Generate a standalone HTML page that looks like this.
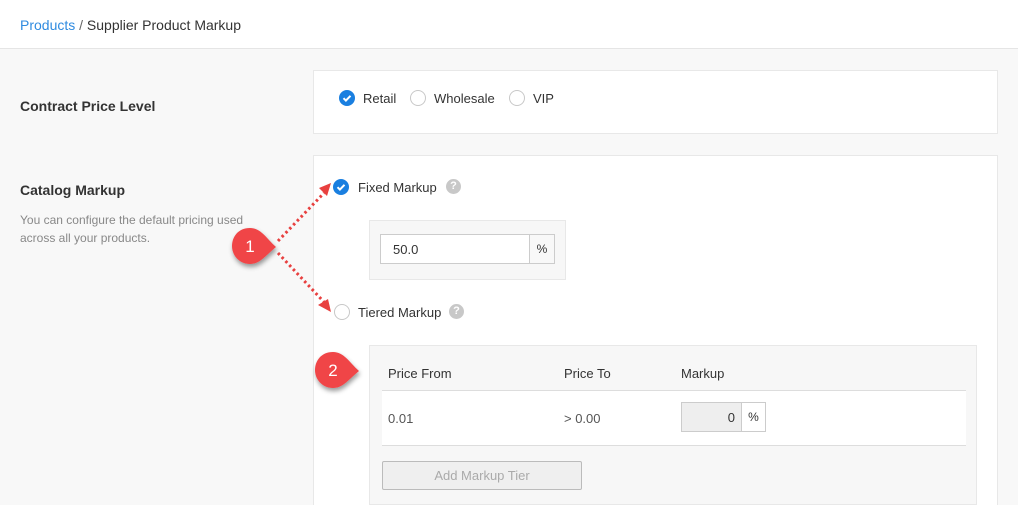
<!DOCTYPE html>
<html><head><style>
*{box-sizing:border-box;margin:0;padding:0}
html,body{width:1018px;height:505px;overflow:hidden}
body{background:#f8f8f8;font-family:"Liberation Sans",sans-serif;font-size:13px;color:#333;position:relative}
.a{position:absolute}
.hdr{left:0;top:0;width:1018px;height:49px;background:#fff;border-bottom:1px solid #e5e5e5}
.card{background:#fff;border:1px solid #e8e8e8}
.rad{width:16px;height:16px;border-radius:50%;border:1px solid #c8c8c8;background:#fff}
.q{width:15px;height:15px;border-radius:50%;background:#c8c8c8;color:#fff;font-size:11px;font-weight:bold;text-align:center;line-height:15px}
.b{font-weight:bold;font-size:14px;color:#333}
</style></head><body>
<div class="a hdr"></div>
<div class="a" style="left:20px;top:17px;font-size:14px"><span style="color:#2f8be0">Products</span> <span style="color:#666">/</span> Supplier Product Markup</div>

<div class="a card" style="left:313px;top:70px;width:685px;height:64px"></div>
<div class="a b" style="left:20px;top:98px">Contract Price Level</div>
<svg class="a" style="left:339px;top:90px" width="16" height="16"><circle cx="8" cy="8" r="8" fill="#1a7fe0"/><path d="M4.5 8.2l2.4 2.4 4.6-4.8" stroke="#fff" stroke-width="2" fill="none"/></svg>
<div class="a" style="left:363px;top:91px">Retail</div>
<div class="a rad" style="left:410px;top:90px"></div>
<div class="a" style="left:434px;top:91px">Wholesale</div>
<div class="a rad" style="left:509px;top:90px"></div>
<div class="a" style="left:533px;top:91px">VIP</div>

<div class="a card" style="left:313px;top:155px;width:685px;height:355px"></div>
<div class="a b" style="left:20px;top:182px">Catalog Markup</div>
<div class="a" style="left:20px;top:211px;color:#888;font-size:12px;line-height:18px">You can configure the default pricing used<br>across all your products.</div>

<svg class="a" style="left:333px;top:179px" width="16" height="16"><circle cx="8" cy="8" r="8" fill="#1a7fe0"/><path d="M4.5 8.2l2.4 2.4 4.6-4.8" stroke="#fff" stroke-width="2" fill="none"/></svg>
<div class="a" style="left:358px;top:180px">Fixed Markup</div>
<div class="a q" style="left:446px;top:179px">?</div>

<div class="a" style="left:369px;top:220px;width:197px;height:60px;background:#f7f7f7;border:1px solid #e8e8e8"></div>
<div class="a" style="left:380px;top:234px;width:150px;height:30px;background:#fff;border:1px solid #ccc;padding:7px 12px">50.0</div>
<div class="a" style="left:529px;top:234px;width:26px;height:30px;background:#f8f8f8;border:1px solid #ccc;text-align:center;line-height:28px;font-size:12px">%</div>

<div class="a rad" style="left:334px;top:304px"></div>
<div class="a" style="left:358px;top:305px">Tiered Markup</div>
<div class="a q" style="left:449px;top:304px">?</div>

<div class="a" style="left:369px;top:345px;width:608px;height:160px;background:#f7f7f7;border:1px solid #e8e8e8"></div>
<div class="a" style="left:382px;top:390px;width:584px;height:56px;background:#fff;border-top:1px solid #ddd;border-bottom:1px solid #ddd"></div>
<div class="a" style="left:388px;top:366px">Price From</div>
<div class="a" style="left:564px;top:366px">Price To</div>
<div class="a" style="left:681px;top:366px">Markup</div>
<div class="a" style="left:388px;top:411px;color:#555">0.01</div>
<div class="a" style="left:564px;top:411px;color:#555">&gt; 0.00</div>
<div class="a" style="left:681px;top:402px;width:61px;height:30px;background:#eee;border:1px solid #ccc;text-align:right;padding:7px 6px">0</div>
<div class="a" style="left:741px;top:402px;width:25px;height:30px;background:#fff;border:1px solid #ccc;text-align:center;line-height:28px;font-size:12px">%</div>
<div class="a" style="left:382px;top:461px;width:200px;height:29px;background:#efefef;border:1px solid #bbb;border-radius:2px;color:#aaa;text-align:center;line-height:27px">Add Markup Tier</div>

<svg class="a" style="left:0;top:0" width="1018" height="505">
<defs><filter id="s" x="-50%" y="-50%" width="200%" height="200%"><feDropShadow dx="1" dy="3" stdDeviation="2.5" flood-opacity="0.4"/></filter></defs>
<g stroke="#e8403f" stroke-width="3" stroke-dasharray="2.5 3" fill="none">
<path d="M278 241 L324 193"/><path d="M278 253 L324 302"/>
</g>
<path d="M319 188 L331 183 L327 196Z" fill="#e8403f"/>
<path d="M318 305 L331 312 L328 299Z" fill="#e8403f"/>
<g filter="url(#s)">
<path d="M250 228 C238 228 232 237 232 246 C232 256 240 264 250 264 C260 264 265 256 276 247 C266 238 261 228 250 228Z" fill="#f04447"/>
<path d="M333 352 C321 352 315 361 315 370 C315 380 323 388 333 388 C343 388 348 380 359 371 C349 362 344 352 333 352Z" fill="#f04447"/>
</g>
<text x="250" y="252" fill="#fff" font-size="17" text-anchor="middle" font-family="Liberation Sans">1</text>
<text x="333" y="376" fill="#fff" font-size="17" text-anchor="middle" font-family="Liberation Sans">2</text>
</svg>
</body></html>
